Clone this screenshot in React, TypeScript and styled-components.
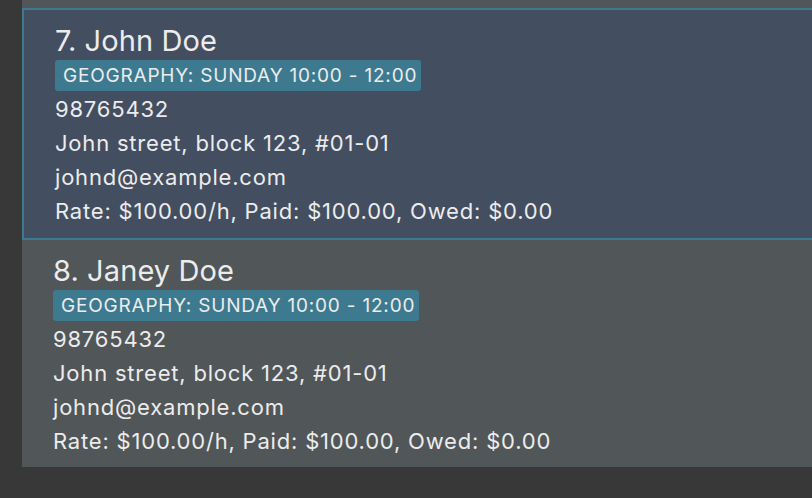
import React from "react";
import styled, { createGlobalStyle } from "styled-components";

const Global = createGlobalStyle`
  html, body { margin: 0; padding: 0; background: #383838; }
  body { width: 812px; height: 498px; overflow: hidden; }
  #root { width: 812px; height: 498px; }
`;

const Page = styled.div`
  width: 812px;
  height: 498px;
  overflow: hidden;
  background: #383838;
  padding-left: 22px;
  box-sizing: border-box;
  font-family: Inter, "Noto Sans", sans-serif;
  color: #ececec;
`;

const List = styled.div`
  display: flex;
  flex-direction: column;
  margin-right: -20px;
`;

const Peek = styled.div`
  height: 8px;
  background: #515658;
`;

const Card = styled.div<{ $selected?: boolean }>`
  display: flex;
  flex-direction: column;
  align-items: flex-start;
  box-sizing: border-box;
  background: ${(p) => (p.$selected ? "#434e60" : "#515658")};
  border: ${(p) => (p.$selected ? "2px solid #3c7b8f" : "none")};
  padding: ${(p) => (p.$selected ? "14px 0 10px 31px" : "14px 0 12px 31px")};
  height: ${(p) => (p.$selected ? "232px" : "227px")};
`;

const Name = styled.div`
  font-size: 29px;
  line-height: 34px;
  margin-bottom: 2px;
  letter-spacing: 0.1px;
`;

const Tag = styled.span`
  display: inline-block;
  background: #3d7a8f;
  border-radius: 3px;
  font-size: 19px;
  letter-spacing: 0.8px;
  line-height: 31px;
  padding: 0 4px 0 8px;
  margin-bottom: 1px;
  white-space: nowrap;
`;

const Line = styled.div`
  font-size: 22px;
  letter-spacing: 0.8px;
  line-height: 34px;
  white-space: nowrap;
`;

type Person = { idx: number; name: string; selected?: boolean };

const people: Person[] = [
  { idx: 7, name: "John Doe", selected: true },
  { idx: 8, name: "Janey Doe" },
];

export default function App() {
  return (
    <>
      <Global />
      <Page>
        <List>
          <Peek />
          {people.map((p) => (
            <Card key={p.idx} $selected={p.selected}>
              <Name>
                {p.idx}. {p.name}
              </Name>
              <Tag>GEOGRAPHY: SUNDAY 10:00 - 12:00</Tag>
              <Line>98765432</Line>
              <Line>John street, block 123, #01-01</Line>
              <Line>johnd@example.com</Line>
              <Line>Rate: $100.00/h, Paid: $100.00, Owed: $0.00</Line>
            </Card>
          ))}
        </List>
      </Page>
    </>
  );
}
